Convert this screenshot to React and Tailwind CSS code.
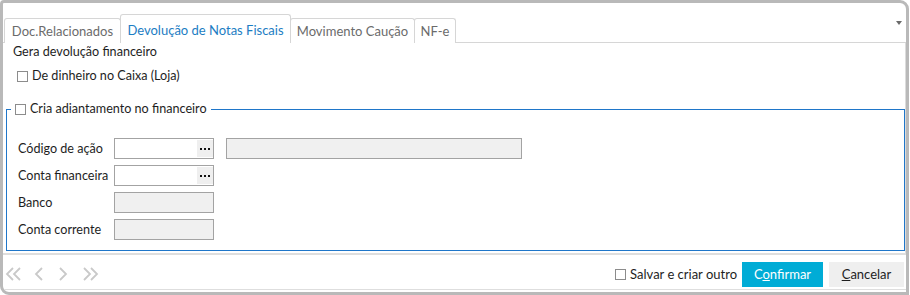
import React from "react";

function Check({ className = "" }) {
  return <span className={`inline-block w-[11px] h-[11px] border border-[#8c8c8c] bg-white shrink-0 ${className}`} />;
}

function Chevron({ dir = "left", double = false }) {
  const w = double ? 17 : 10;
  const paths = [];
  if (dir === "left") {
    if (double) {
      paths.push("M8 1 L2 7 L8 13", "M15 1 L9 7 L15 13");
    } else {
      paths.push("M8 1 L2 7 L8 13");
    }
  } else {
    if (double) {
      paths.push("M2 1 L8 7 L2 13", "M9 1 L15 7 L9 13");
    } else {
      paths.push("M2 1 L8 7 L2 13");
    }
  }
  return (
    <svg width={w} height="14" viewBox={`0 0 ${w} 14`} className="shrink-0">
      {paths.map((d, i) => (
        <path key={i} d={d} fill="none" stroke="#c9c9c9" strokeWidth="1.8" />
      ))}
    </svg>
  );
}

function Dots() {
  return (
    <svg width="10" height="2" viewBox="0 0 10 2">
      <rect x="0" y="0" width="2" height="2" fill="#111" />
      <rect x="4" y="0" width="2" height="2" fill="#111" />
      <rect x="8" y="0" width="2" height="2" fill="#111" />
    </svg>
  );
}

function Field({ label, type }) {
  return (
    <div className="flex items-center h-[21px]">
      <div className="w-[96px] shrink-0 text-[#1e1e1e]">{label}</div>
      {type === "lookup" ? (
        <div className="w-[100px] h-[21px] border border-[#a3a3a3] bg-white flex items-stretch py-[1px]">
          <div className="ml-auto w-[16px] bg-[#efefef] flex items-center justify-center">
            <Dots />
          </div>
        </div>
      ) : (
        <div className="w-[100px] h-[21px] border border-[#a3a3a3] bg-[#f0f0f0]" />
      )}
      {label === "Código de ação" && (
        <div className="ml-[12px] w-[296px] h-[21px] border border-[#a3a3a3] bg-[#f0f0f0]" />
      )}
    </div>
  );
}

export default function App() {
  return (
    <div className="w-[910px] h-[295px] bg-white font-['Lato',sans-serif] text-[12.6px] leading-[16px]">
      <div className="w-[909px] h-[295px] border-[3px] border-[#b9b9b9] rounded-tl-[4px] rounded-tr-[9px] rounded-bl-[9px] flex flex-col overflow-hidden">
        {/* Tab strip */}
        <div className="h-[40px] shrink-0 flex items-end pl-[1px] border-b border-[#d6d6d6] text-[13px]">
          <div className="w-[117px] h-[25px] -mb-px border border-b-0 border-[#d6d6d6] rounded-t-[3px] flex items-center justify-center text-[#6b6b6b] bg-white">
            Doc.Relacionados
          </div>
          <div className="w-[171px] h-[29px] -mb-px -ml-px border border-b-0 border-[#d6d6d6] rounded-t-[3px] flex items-center justify-center text-[#1c7dc3] bg-white relative z-10 pt-[1px]">
            Devolução de Notas Fiscais
          </div>
          <div className="w-[125px] h-[25px] -mb-px -ml-px border border-b-0 border-[#d6d6d6] rounded-t-[3px] flex items-center justify-center text-[#6b6b6b] bg-white">
            Movimento Caução
          </div>
          <div className="w-[42px] h-[25px] -mb-px -ml-px border border-b-0 border-[#d6d6d6] rounded-t-[3px] flex items-center justify-center text-[#6b6b6b] bg-white">
            NF-e
          </div>
          <div className="ml-auto self-start mt-[18px] mr-[4px] w-0 h-0 border-l-[3px] border-r-[3px] border-t-[4px] border-l-transparent border-r-transparent border-t-[#6a6a6a]" />
        </div>

        {/* Panel */}
        <div className="h-[210px] shrink-0 border-r border-[#dcdcdc] flex flex-col">
          <div className="pl-[10px] mt-[1px] text-[#1e1e1e]">Gera devolução financeiro</div>
          <div className="flex items-center gap-[4px] pl-[14px] mt-[8px] text-[#1e1e1e]">
            <Check />
            <span>De dinheiro no Caixa (Loja)</span>
          </div>
          <fieldset className="ml-[3px] mt-[17px] h-[150px] border border-[#1f76c9] px-0 pb-0">
            <legend className="ml-[4px] px-[4px] flex items-center gap-[4px] text-[#1e1e1e]">
              <Check />
              <span>Cria adiantamento no financeiro</span>
            </legend>
            <div className="mt-[21px] pl-[11px] flex flex-col gap-[6px]">
              <Field label="Código de ação" type="lookup" />
              <Field label="Conta financeira" type="lookup" />
              <Field label="Banco" type="disabled" />
              <Field label="Conta corrente" type="disabled" />
            </div>
          </fieldset>
        </div>

        {/* Footer */}
        <div className="h-[37px] shrink-0 border-t-2 border-b border-[#dedede] flex items-center pt-[4px] pr-[2px]">
          <div className="flex items-center pl-[2px]">
            <Chevron dir="left" double />
            <div className="ml-[12px]"><Chevron dir="left" /></div>
            <div className="ml-[14px]"><Chevron dir="right" /></div>
            <div className="ml-[14px]"><Chevron dir="right" double /></div>
          </div>
          <div className="ml-auto flex items-center gap-[4px] text-[#1e1e1e] text-[13px]">
            <Check />
            <span>Salvar e criar outro</span>
          </div>
          <button className="ml-[5px] w-[81px] h-[25px] bg-[#00acd6] text-white text-[13px]">
            C<span className="underline">o</span>nfirmar
          </button>
          <button className="ml-[6px] w-[75px] h-[25px] bg-[#efefef] text-[#1e1e1e] text-[13px]">
            <span className="underline">C</span>ancelar
          </button>
        </div>
      </div>
    </div>
  );
}
